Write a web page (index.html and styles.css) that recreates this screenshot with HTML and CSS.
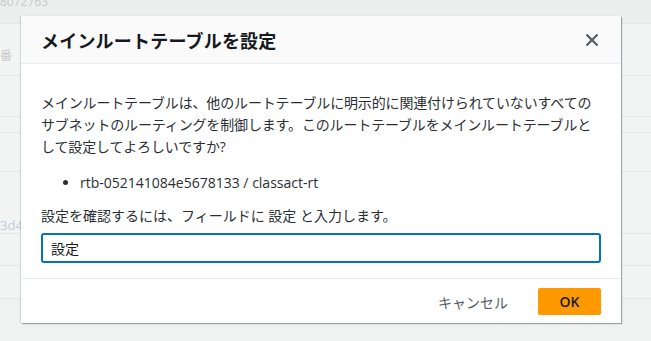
FILE: index.html
```html
<!DOCTYPE html>
<html lang="ja">

<head>
    <meta charset="UTF-8">
    <meta name="viewport" content="width=device-width, initial-scale=1.0">
    <link rel="stylesheet" href="styles.css">
</head>

<body>
    <div class="console">
        <div class="console-top"><span class="faded">8072763</span></div>
        <div class="table">
            <div class="row row-head"><span class="faded">番</span></div>
            <div class="row row-a"></div>
            <div class="row row-b"></div>
            <div class="row row-c"></div>
            <div class="row row-d"><span class="faded link">3d4</span></div>
            <div class="row row-e"></div>
            <div class="row row-f"></div>
        </div>
    </div>

    <div class="modal" role="dialog" aria-labelledby="modal-title">
        <div class="modal-header">
            <h2 id="modal-title">メインルートテーブルを設定</h2>
            <button class="close" aria-label="閉じる">
                <svg width="14" height="14" viewBox="0 0 14 14">
                    <path d="M1.5 1.5 L12.5 12.5 M12.5 1.5 L1.5 12.5" stroke="#545b64" stroke-width="2.2" fill="none" />
                </svg>
            </button>
        </div>

        <div class="modal-body">
            <p>メインルートテーブルは、他のルートテーブルに明示的に関連付けられていないすべてのサブネットのルーティングを制御します。このルートテーブルをメインルートテーブルとして設定してよろしいですか?</p>
            <ul>
                <li>rtb-052141084e5678133 / classact-rt</li>
            </ul>
            <label for="confirm">設定を確認するには、フィールドに 設定 と入力します。</label>
            <input type="text" id="confirm" value="設定" />
        </div>

        <div class="modal-footer">
            <button class="cancel">キャンセル</button>
            <button class="primary">OK</button>
        </div>
    </div>
</body>

</html>
```

FILE: styles.css
```css
html {
    background-color: #f0f1f1;
}

body {
    margin: 0;
    font-family: "Open Sans", "Noto Sans CJK JP", sans-serif;
    font-size: 14px;
    color: #16191f;
}

/* dimmed console behind the dialog */
.console-top {
    height: 24px;
    background-color: #eceded;
    border-bottom: 1px solid #e4e6e6;
    box-sizing: border-box;
    overflow: hidden;
}

.console-top .faded {
    display: block;
    margin-top: -5px;
    font-size: 12px;
    line-height: 14px;
}

.faded {
    color: #c9caca;
}

.faded.link {
    color: #bccddb;
}

.table {
    background-color: #f3f4f4;
}

.row {
    border-bottom: 1px solid #e6e8e8;
    box-sizing: border-box;
    display: flex;
    align-items: center;
    font-size: 13px;
}

.row-head {
    height: 52px;
    padding-top: 10px;
    font-size: 12px;
}

.row-a {
    height: 41px;
}

.row-b {
    height: 16px;
}

.row-c {
    height: 39px;
}

.row-d {
    height: 62px;
    padding-top: 44px;
}

.row-e {
    height: 32px;
}

.row-f {
    height: 33px;
}

/* dialog */
.modal {
    position: absolute;
    top: 16px;
    left: 21px;
    width: 600px;
    background-color: #fff;
    box-shadow: 1px 1px 1px 0 rgba(0, 28, 36, 0.35), -1px 0 1px 0 rgba(0, 28, 36, 0.12);
}

.modal-header {
    height: 48px;
    box-sizing: border-box;
    padding: 0 20px;
    display: flex;
    align-items: center;
    justify-content: space-between;
    background-color: #fafafa;
    border-bottom: 1px solid #eaeded;
}

.modal-header h2 {
    margin: 0;
    font-size: 18px;
    font-weight: 700;
    letter-spacing: 0.2px;
    color: #16191f;
}

.close {
    border: 0;
    padding: 0;
    margin-right: 2px;
    background: none;
    display: flex;
}

.modal-body {
    padding: 28px 20px 15px;
    color: #2b2f34;
    line-height: 22px;
}

.modal-body p {
    margin: 0;
    letter-spacing: -0.15px;
}

.modal-body ul {
    margin: 14px 0 11px;
    padding-left: 39px;
}

.modal-body label {
    display: block;
    margin-bottom: 6px;
}

.modal-body input {
    display: block;
    width: 100%;
    height: 30px;
    box-sizing: border-box;
    padding: 0 8px;
    border: 2px solid #0073bb;
    border-radius: 3px;
    font: inherit;
    color: #16191f;
    outline: none;
}

.modal-footer {
    border-top: 1px solid #eaeded;
    padding: 9px 20px 8px;
    display: flex;
    justify-content: flex-end;
    align-items: center;
    gap: 30px;
}

.modal-footer button {
    font-family: inherit;
    font-size: 14px;
    border: 0;
}

.cancel {
    background: none;
    padding: 0;
    color: #545b64;
}

.primary {
    width: 63px;
    height: 27px;
    border-radius: 2px;
    background-color: #ff9900;
    color: #16191f;
    font-size: 15px;
    font-weight: 600;
}
```
